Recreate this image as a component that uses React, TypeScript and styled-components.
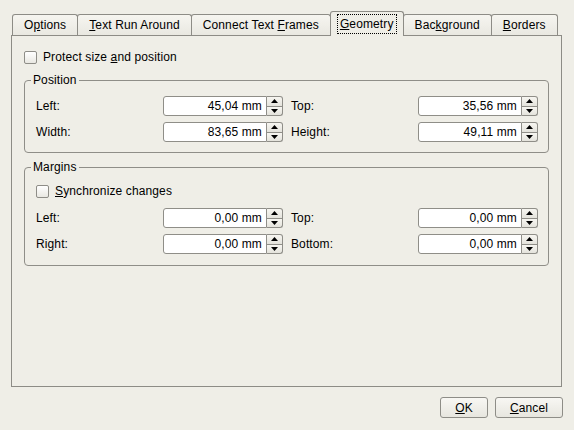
import React from "react";
import styled, { createGlobalStyle } from "styled-components";

const GlobalStyle = createGlobalStyle`
  html, body {
    margin: 0;
    padding: 0;
    background: #efeee7;
  }
  body {
    font-family: "Liberation Sans", Arial, sans-serif;
    font-size: 12px;
    letter-spacing: 0.12px;
    color: #000;
  }
  * {
    box-sizing: border-box;
  }
`;

const Dialog = styled.div`
  display: flex;
  flex-direction: column;
  width: 574px;
  height: 430px;
  padding: 11px 12px 0 11px;
`;

const TabBar = styled.div`
  display: flex;
  align-items: flex-end;
  height: 25px;
  padding-left: 1px;
  margin-bottom: -1px;
  position: relative;
  z-index: 1;
`;

const Tab = styled.div<{ $active?: boolean }>`
  display: flex;
  align-items: center;
  justify-content: center;
  height: ${(p) => (p.$active ? "25px" : "21px")};
  margin-bottom: ${(p) => (p.$active ? "0" : "1px")};
  margin-left: -1px;
  padding: ${(p) => (p.$active ? "0 6px 1px" : "0 11px")};
  border: 1px solid #8d8c86;
  border-bottom: none;
  border-radius: 3px 3px 0 0;
  background: ${(p) =>
    p.$active ? "#efeee7" : "linear-gradient(#f6f5f0, #e9e8e1)"};
  white-space: nowrap;
  &:first-child {
    margin-left: 0;
  }
`;

const TabText = styled.span`
  white-space: pre;
`;

const FocusLabel = styled.span`
  padding: 2px 2px;
  line-height: 14px;
  border: 1px dotted #000;
  white-space: pre;
`;

const Panel = styled.div`
  flex: 1;
  display: flex;
  flex-direction: column;
  border: 1px solid #8d8c86;
  background: #efeee7;
  padding: 13px 12px 0 12px;
`;

const CheckRow = styled.label`
  display: flex;
  align-items: center;
  gap: 6px;
  height: 16px;
`;

const CheckBox = styled.span`
  width: 13px;
  height: 13px;
  border: 1px solid #8e8d87;
  border-radius: 2px;
  background: linear-gradient(#ffffff, #e9e8e2);
`;

const Group = styled.fieldset<{ $gap: number; $bottom: number }>`
  margin: ${(p) => p.$gap}px 0 0 0;
  padding: 9px 10px ${(p) => p.$bottom}px 11px;
  border: 1px solid #8f8e88;
  border-radius: 4px;
  min-inline-size: 0;
`;

const Legend = styled.legend`
  padding: 0 2px;
  margin-left: -5px;
  line-height: 14px;
`;

const Grid = styled.div<{ $top?: number }>`
  display: grid;
  grid-template-columns: 1fr 120px 1fr 120px;
  column-gap: 8px;
  row-gap: 6px;
  align-items: center;
  margin-top: ${(p) => p.$top ?? 0}px;
`;

const Label = styled.span`
  white-space: nowrap;
`;

const Spin = styled.div`
  display: flex;
  width: 120px;
  height: 20px;
`;

const Field = styled.div`
  flex: 1;
  border: 1px solid #8f8e88;
  border-radius: 3px 0 0 3px;
  background: #fff;
  text-align: right;
  padding-right: 4px;
  line-height: 18px;
`;

const Arrows = styled.div`
  display: flex;
  flex-direction: column;
  width: 16px;
`;

const ArrowButton = styled.div<{ $down?: boolean }>`
  flex: 1;
  display: flex;
  align-items: center;
  justify-content: center;
  border: 1px solid #8f8e88;
  border-left: none;
  border-top: ${(p) => (p.$down ? "none" : "1px solid #8f8e88")};
  border-radius: ${(p) => (p.$down ? "0 0 3px 0" : "0 3px 0 0")};
  background: linear-gradient(#f7f6f1, #e4e3dc);
`;

const Footer = styled.div`
  display: flex;
  justify-content: flex-end;
  gap: 7px;
  padding: 10px 0 12px;
  margin-right: -1px;
`;

const Button = styled.button`
  height: 21px;
  min-width: 46px;
  padding: 0 14px;
  border: 1px solid #8e8d87;
  border-radius: 3px;
  background: linear-gradient(#f8f7f3, #e7e6df);
  font: inherit;
  letter-spacing: inherit;
  color: #000;
`;

function Arrow({ down }: { down?: boolean }) {
  return (
    <svg width="7" height="4" viewBox="0 0 7 4">
      <polygon points={down ? "0,0 7,0 3.5,4" : "3.5,0 7,4 0,4"} fill="#000" />
    </svg>
  );
}

function SpinBox({ value }: { value: string }) {
  return (
    <Spin>
      <Field>{value}</Field>
      <Arrows>
        <ArrowButton>
          <Arrow />
        </ArrowButton>
        <ArrowButton $down>
          <Arrow down />
        </ArrowButton>
      </Arrows>
    </Spin>
  );
}

const tabs: { key: string; label: React.ReactNode }[] = [
  { key: "options", label: <>O<u>p</u>tions</> },
  { key: "run", label: <><u>T</u>ext Run Around</> },
  { key: "connect", label: <>Connect Text <u>F</u>rames</> },
  { key: "geometry", label: <><u>G</u>eometry</> },
  { key: "background", label: <>Bac<u>k</u>ground</> },
  { key: "borders", label: <><u>B</u>orders</> },
];

export default function App() {
  return (
    <>
      <GlobalStyle />
      <Dialog>
        <TabBar>
          {tabs.map((t) =>
            t.key === "geometry" ? (
              <Tab key={t.key} $active>
                <FocusLabel>{t.label}</FocusLabel>
              </Tab>
            ) : (
              <Tab key={t.key}>
                <TabText>{t.label}</TabText>
              </Tab>
            )
          )}
        </TabBar>
        <Panel>
          <CheckRow>
            <CheckBox />
            <span>
              Protect size <u>a</u>nd position
            </span>
          </CheckRow>
          <Group $gap={8} $bottom={10}>
            <Legend>Position</Legend>
            <Grid>
              <Label>Left:</Label>
              <SpinBox value="45,04 mm" />
              <Label>Top:</Label>
              <SpinBox value="35,56 mm" />
              <Label>Width:</Label>
              <SpinBox value="83,65 mm" />
              <Label>Height:</Label>
              <SpinBox value="49,11 mm" />
            </Grid>
          </Group>
          <Group $gap={7} $bottom={11}>
            <Legend>Margins</Legend>
            <CheckRow>
              <CheckBox />
              <span>
                <u>S</u>ynchronize changes
              </span>
            </CheckRow>
            <Grid $top={9}>
              <Label>Left:</Label>
              <SpinBox value="0,00 mm" />
              <Label>Top:</Label>
              <SpinBox value="0,00 mm" />
              <Label>Right:</Label>
              <SpinBox value="0,00 mm" />
              <Label>Bottom:</Label>
              <SpinBox value="0,00 mm" />
            </Grid>
          </Group>
        </Panel>
        <Footer>
          <Button>
            <u>O</u>K
          </Button>
          <Button>
            <u>C</u>ancel
          </Button>
        </Footer>
      </Dialog>
    </>
  );
}
